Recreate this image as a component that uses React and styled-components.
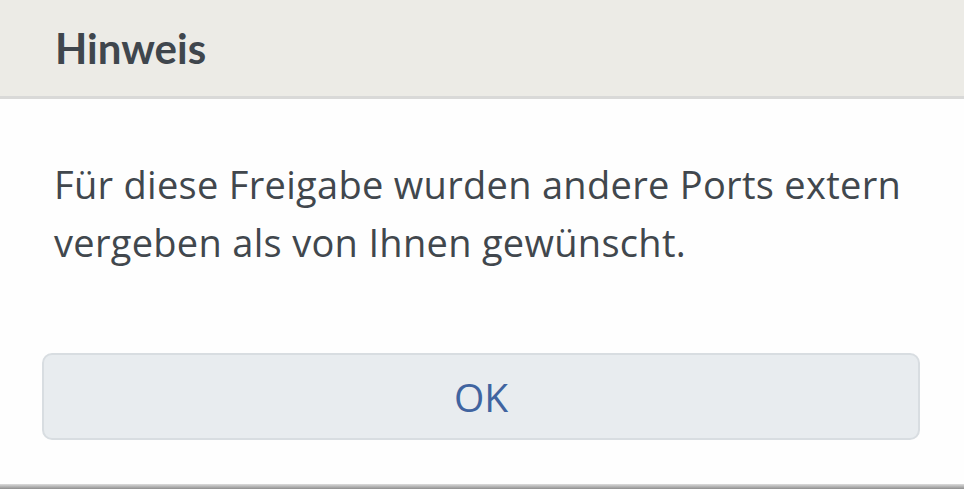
import React from "react";
import styled, { createGlobalStyle } from "styled-components";

const Global = createGlobalStyle`
  html, body { margin: 0; padding: 0; background: #fff; }
  body { font-family: "Open Sans", "Noto Sans", sans-serif; }
`;

const Dialog = styled.div`
  width: 964px;
  height: 489px;
  display: flex;
  flex-direction: column;
  background: #fefefe;
  overflow: hidden;
`;

const Header = styled.header`
  height: 96px;
  flex: none;
  display: flex;
  align-items: center;
  padding: 0 55px;
  background: #ecebe6;
  border-bottom: 3px solid #d9d9d8;
`;

const Title = styled.h1`
  margin: 0;
  font-family: Lato, sans-serif;
  font-size: 42px;
  font-weight: 700;
  color: #3f464d;
`;

const Body = styled.div`
  flex: 1;
  display: flex;
  flex-direction: column;
  padding: 0 44px 0 42px;
`;

const Message = styled.p`
  margin: 56px 0 0 12px;
  font-size: 38px;
  letter-spacing: 0.3px;
  line-height: 58px;
  color: #41474d;
`;

const Button = styled.button`
  margin-top: auto;
  margin-bottom: 44px;
  height: 87px;
  border: 2px solid #d8dde1;
  border-radius: 10px;
  background: #e8ecef;
  color: #4064a0;
  font-family: inherit;
  font-size: 39px;
`;

const BottomEdge = styled.div`
  height: 5px;
  flex: none;
  background: linear-gradient(#dcdcdc, #8f8f8f);
`;

export default function App() {
  return (
    <>
      <Global />
      <Dialog>
        <Header>
          <Title>Hinweis</Title>
        </Header>
        <Body>
          <Message>
            Für diese Freigabe wurden andere Ports extern vergeben als von Ihnen gewünscht.
          </Message>
          <Button>OK</Button>
        </Body>
        <BottomEdge />
      </Dialog>
    </>
  );
}
